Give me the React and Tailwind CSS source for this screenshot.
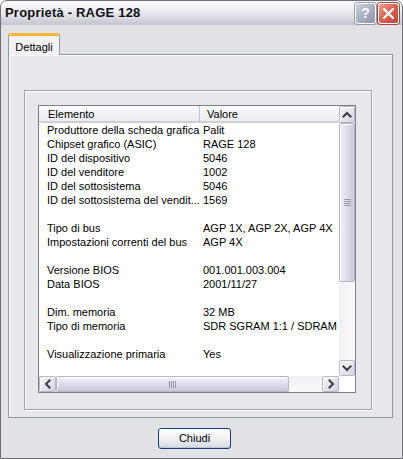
import React from "react";

const rows = [
  ["Produttore della scheda grafica", "Palit"],
  ["Chipset grafico (ASIC)", "RAGE 128"],
  ["ID del dispositivo", "5046"],
  ["ID del venditore", "1002"],
  ["ID del sottosistema", "5046"],
  ["ID del sottosistema del vendit...", "1569"],
  ["", ""],
  ["Tipo di bus", "AGP 1X, AGP 2X, AGP 4X"],
  ["Impostazioni correnti del bus", "AGP 4X"],
  ["", ""],
  ["Versione BIOS", "001.001.003.004"],
  ["Data BIOS", "2001/11/27"],
  ["", ""],
  ["Dim. memoria", "32 MB"],
  ["Tipo di memoria", "SDR SGRAM 1:1 / SDRAM"],
  ["", ""],
  ["Visualizzazione primaria", "Yes"],
];

function Arrow({ dir }) {
  const d = {
    up: "M3.5 8.5 L7 5 L10.5 8.5",
    down: "M3.5 5.5 L7 9 L10.5 5.5",
    left: "M8.5 3.5 L5 7 L8.5 10.5",
    right: "M5.5 3.5 L9 7 L5.5 10.5",
  }[dir];
  return (
    <svg width="14" height="14" viewBox="0 0 14 14">
      <path d={d} fill="none" stroke="#3c3c48" strokeWidth="2" strokeLinecap="square" />
    </svg>
  );
}

function SBtn({ dir, className }) {
  return (
    <div
      className={
        "flex items-center justify-center border border-[#b8b8c4] rounded-[2px] bg-gradient-to-br from-[#f6f6fa] to-[#d4d4e0] shadow-[inset_1px_1px_0_#fff] " +
        className
      }
    >
      <Arrow dir={dir} />
    </div>
  );
}

export default function App() {
  return (
    <div className="w-[403px] h-[459px] bg-[#e2e1e6] flex flex-col border border-[#6f6f7a] rounded-t-[7px] overflow-hidden font-['Liberation_Sans',Arial,sans-serif] text-[11px] text-black">
      {/* Title bar */}
      <div className="h-[24px] flex items-center pl-[4px] pr-[3px] bg-gradient-to-b from-[#fdfdfe] via-[#e8e8ee] to-[#c4c4ce]">
        <div className="font-bold text-[13px] text-[#101010] tracking-[0.2px] flex-1">
          Proprietà - RAGE 128
        </div>
        <div className="flex gap-[2px] mt-[1px]">
          <div className="w-[21px] h-[21px] rounded-[3px] border border-white bg-gradient-to-br from-[#c9cfdc] via-[#a9b1c4] to-[#8b93a8] flex items-center justify-center text-white font-bold text-[14px] shadow-[0_0_0_1px_#9a9aa6]">
            ?
          </div>
          <div className="w-[21px] h-[21px] rounded-[3px] border border-white bg-gradient-to-br from-[#eb9a8a] via-[#d8614e] to-[#c04434] flex items-center justify-center shadow-[0_0_0_1px_#a04a40]">
            <svg width="13" height="13" viewBox="0 0 13 13">
              <path d="M2 2 L11 11 M11 2 L2 11" stroke="#fff" strokeWidth="2.2" strokeLinecap="round" />
            </svg>
          </div>
        </div>
      </div>

      {/* Body */}
      <div className="flex-1 flex flex-col pt-[8px] pl-[7px]">
        {/* Tab strip */}
        <div className="flex h-[21px] relative z-10">
          <div className="w-[52px] h-[22px] bg-[#f2f2f5] border border-[#919b9c] border-b-0 border-t-[3px] border-t-[#f4b840] rounded-t-[3px] flex items-start justify-center pt-[3px]">
            Dettagli
          </div>
        </div>

        {/* Tab panel */}
        <div className="w-[385px] h-[364px] border border-[#919b9c] bg-[#e8e8ec] shadow-[inset_1px_1px_0_#fff] pt-[35px] pl-[15px]">
          {/* Group frame */}
          <div className="w-[348px] h-[320px] border border-[#a2a2aa] shadow-[inset_1px_1px_0_#fff,1px_1px_0_#fff] pt-[14px] pl-[13px]">
            {/* List view */}
            <div className="w-[318px] h-[288px] border border-[#7f7f88] bg-white flex flex-col">
              <div className="flex flex-1 min-h-0">
                <div className="w-[300px] flex flex-col overflow-hidden">
                  {/* Header */}
                  <div className="h-[17px] flex bg-gradient-to-b from-[#fbfbfc] to-[#ebebef] border-b-[2px] border-[#cfcfd8] leading-[13px] pt-[2px]">
                    <div className="w-[161px] pl-[9px] border-r border-[#c5c5cf] -mt-[2px] pt-[2px]">Elemento</div>
                    <div className="flex-1 pl-[7px]">Valore</div>
                  </div>
                  {/* Rows */}
                  <div>
                    {rows.map(([a, b], i) => (
                      <div key={i} className="h-[14px] leading-[14px] flex whitespace-nowrap">
                        <div className="w-[161px] pl-[8px] overflow-hidden">{a}</div>
                        <div className="flex-1 pl-[3px] overflow-hidden">{b}</div>
                      </div>
                    ))}
                  </div>
                </div>
                {/* Vertical scrollbar */}
                <div className="w-[16px] flex flex-col bg-[#f3f3f7]">
                  <SBtn dir="up" className="h-[17px]" />
                  <div className="h-[159px] border border-[#b4b4c2] rounded-[2px] bg-gradient-to-r from-[#f2f2f8] via-[#dedeea] to-[#c8c8da] flex items-center justify-center shadow-[inset_1px_1px_0_#fff]">
                    <div className="flex flex-col gap-[1px]">
                      <div className="w-[7px] h-[1px] bg-[#9898a8]" />
                      <div className="w-[7px] h-[1px] bg-[#9898a8]" />
                      <div className="w-[7px] h-[1px] bg-[#9898a8]" />
                      <div className="w-[7px] h-[1px] bg-[#9898a8]" />
                    </div>
                  </div>
                  <div className="flex-1 bg-gradient-to-r from-[#f0f0f4] to-[#fbfbfd]" />
                  <SBtn dir="down" className="h-[16px]" />
                </div>
              </div>
              {/* Horizontal scrollbar */}
              <div className="h-[16px] flex bg-[#f3f3f7]">
                <SBtn dir="left" className="w-[17px]" />
                <div className="w-[233px] border border-[#b4b4c2] rounded-[2px] bg-gradient-to-b from-[#f2f2f8] via-[#dedeea] to-[#c8c8da] flex items-center justify-center shadow-[inset_1px_1px_0_#fff]">
                  <div className="flex gap-[1px]">
                    <div className="w-[1px] h-[7px] bg-[#9898a8]" />
                    <div className="w-[1px] h-[7px] bg-[#9898a8]" />
                    <div className="w-[1px] h-[7px] bg-[#9898a8]" />
                    <div className="w-[1px] h-[7px] bg-[#9898a8]" />
                  </div>
                </div>
                <div className="flex-1 bg-gradient-to-b from-[#f0f0f4] to-[#fbfbfd]" />
                <SBtn dir="right" className="w-[17px]" />
                <div className="w-[16px] bg-white" />
              </div>
            </div>
          </div>
        </div>

        {/* Button */}
        <div className="pt-[10px] pl-[150px]">
          <div className="w-[73px] h-[21px] rounded-[3px] border border-[#1c3c78] bg-gradient-to-b from-[#ffffff] via-[#f2f2f4] to-[#d8d8e0] shadow-[inset_0_-1px_0_#b8c4dc,inset_0_1px_0_#fff] flex items-center justify-center">
            Chiudi
          </div>
        </div>
      </div>
    </div>
  );
}
